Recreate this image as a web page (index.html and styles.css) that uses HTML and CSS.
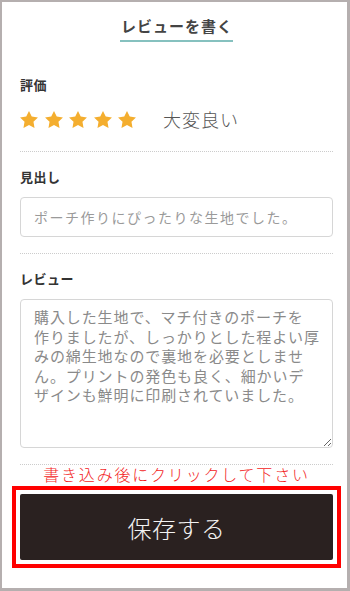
FILE: index.html
```html
<!DOCTYPE html>
<html lang="ja">
  <head>
    <meta charset="UTF-8" />
    <meta name="viewport" content="width=device-width, initial-scale=1.0" />
    <title>レビューを書く</title>
    <link rel="stylesheet" href="styles.css">
  </head>

  <body>
    <div class="frame">
      <div class="page">
        <!-- タイトル -->
        <div class="header">
          <h1 class="title">レビューを書く</h1>
        </div>

        <!-- 評価 -->
        <div class="field field-rating">
          <p class="label">評価</p>
          <div class="rating">
            <div class="stars">
              <svg class="star" viewBox="2 2 20 19.02"><polygon points="12,2 15.09,8.26 22,9.27 17,14.14 18.18,21.02 12,17.77 5.82,21.02 7,14.14 2,9.27 8.91,8.26" /></svg>
              <svg class="star" viewBox="2 2 20 19.02"><polygon points="12,2 15.09,8.26 22,9.27 17,14.14 18.18,21.02 12,17.77 5.82,21.02 7,14.14 2,9.27 8.91,8.26" /></svg>
              <svg class="star" viewBox="2 2 20 19.02"><polygon points="12,2 15.09,8.26 22,9.27 17,14.14 18.18,21.02 12,17.77 5.82,21.02 7,14.14 2,9.27 8.91,8.26" /></svg>
              <svg class="star" viewBox="2 2 20 19.02"><polygon points="12,2 15.09,8.26 22,9.27 17,14.14 18.18,21.02 12,17.77 5.82,21.02 7,14.14 2,9.27 8.91,8.26" /></svg>
              <svg class="star" viewBox="2 2 20 19.02"><polygon points="12,2 15.09,8.26 22,9.27 17,14.14 18.18,21.02 12,17.77 5.82,21.02 7,14.14 2,9.27 8.91,8.26" /></svg>
            </div>
            <span class="rating-text">大変良い</span>
          </div>
        </div>

        <!-- 見出し -->
        <div class="field">
          <p class="label">見出し</p>
          <input type="text" class="headline" placeholder="ポーチ作りにぴったりな生地でした。" />
        </div>

        <!-- レビュー -->
        <div class="field">
          <p class="label">レビュー</p>
          <textarea class="review">購入した生地で、マチ付きのポーチを
作りましたが、しっかりとした程よい厚
みの綿生地なので裏地を必要としませ
ん。プリントの発色も良く、細かいデ
ザインも鮮明に印刷されていました。</textarea>
        </div>

        <p class="notice">書き込み後にクリックして下さい</p>
        <div class="save-box">
          <button class="save-btn">保存する</button>
        </div>
      </div>
    </div>
  </body>
</html>
```

FILE: styles.css
```css
* {
  margin: 0;
  padding: 0;
  box-sizing: border-box;
  font-family: "Noto Sans CJK JP", "Noto Sans", sans-serif;
}

body {
  background-color: #fff;
}

.frame {
  width: 350px;
  height: 591px;
  border-style: solid;
  border-color: #b5afaf;
  border-width: 2px 3px 3px 2px;
  background-color: #fff;
  overflow: hidden;
}

.page {
  padding: 0 14px 0 18px;
}

.header {
  text-align: center;
  padding-top: 11px;
  margin-bottom: 18px;
}

.title {
  display: inline-block;
  font-size: 15px;
  line-height: 22px;
  font-weight: 700;
  letter-spacing: 1px;
  color: #444;
  padding: 0 0 3px 1px;
  border-bottom: 2px solid #86c1bf;
}

.field {
  padding: 15px 0 16px;
  border-bottom: 1px dotted #ccc;
}

.label {
  font-size: 13px;
  line-height: 20px;
  font-weight: 700;
  letter-spacing: 0.5px;
  color: #333;
  margin-bottom: 10px;
}

.field-rating {
  padding-bottom: 20px;
}

.field-rating .label {
  margin-bottom: 12px;
}

.rating {
  display: flex;
  align-items: center;
  height: 24px;
}

.stars {
  display: flex;
  gap: 6.5px;
}

.star {
  width: 18px;
  height: 17px;
  fill: #f4ae2f;
}

.rating-text {
  margin-left: 27px;
  font-size: 18px;
  font-weight: 300;
  letter-spacing: 1px;
  color: #555;
}

.headline {
  display: block;
  width: 100%;
  height: 40px;
  padding: 0 8px 0 13px;
  border: 1px solid #d6d6d6;
  border-radius: 4px;
  font-size: 14px;
  letter-spacing: 1.5px;
  color: #555;
  outline: none;
}

.headline::placeholder {
  color: #9a9a9a;
}

.review {
  display: block;
  width: 100%;
  height: 149px;
  padding: 7px 6px 7px 13px;
  border: 1px solid #d6d6d6;
  border-radius: 4px;
  font-size: 15px;
  line-height: 19.5px;
  letter-spacing: 0.9px;
  color: #8a8a8a;
  white-space: pre;
  overflow: hidden;
  outline: none;
}

.notice {
  text-align: center;
  font-size: 16px;
  line-height: 18px;
  font-weight: 300;
  letter-spacing: 1.8px;
  color: #f21c1c;
}

.save-box {
  margin: 3px -8px 0;
  padding: 4px;
  border: 4px solid #f00;
}

.save-btn {
  display: block;
  width: 100%;
  height: 66px;
  border: none;
  border-radius: 2px;
  background-color: #2a2120;
  color: #f2f2f2;
  font-size: 24px;
  font-weight: 300;
  letter-spacing: 0.5px;
  cursor: pointer;
}
```
